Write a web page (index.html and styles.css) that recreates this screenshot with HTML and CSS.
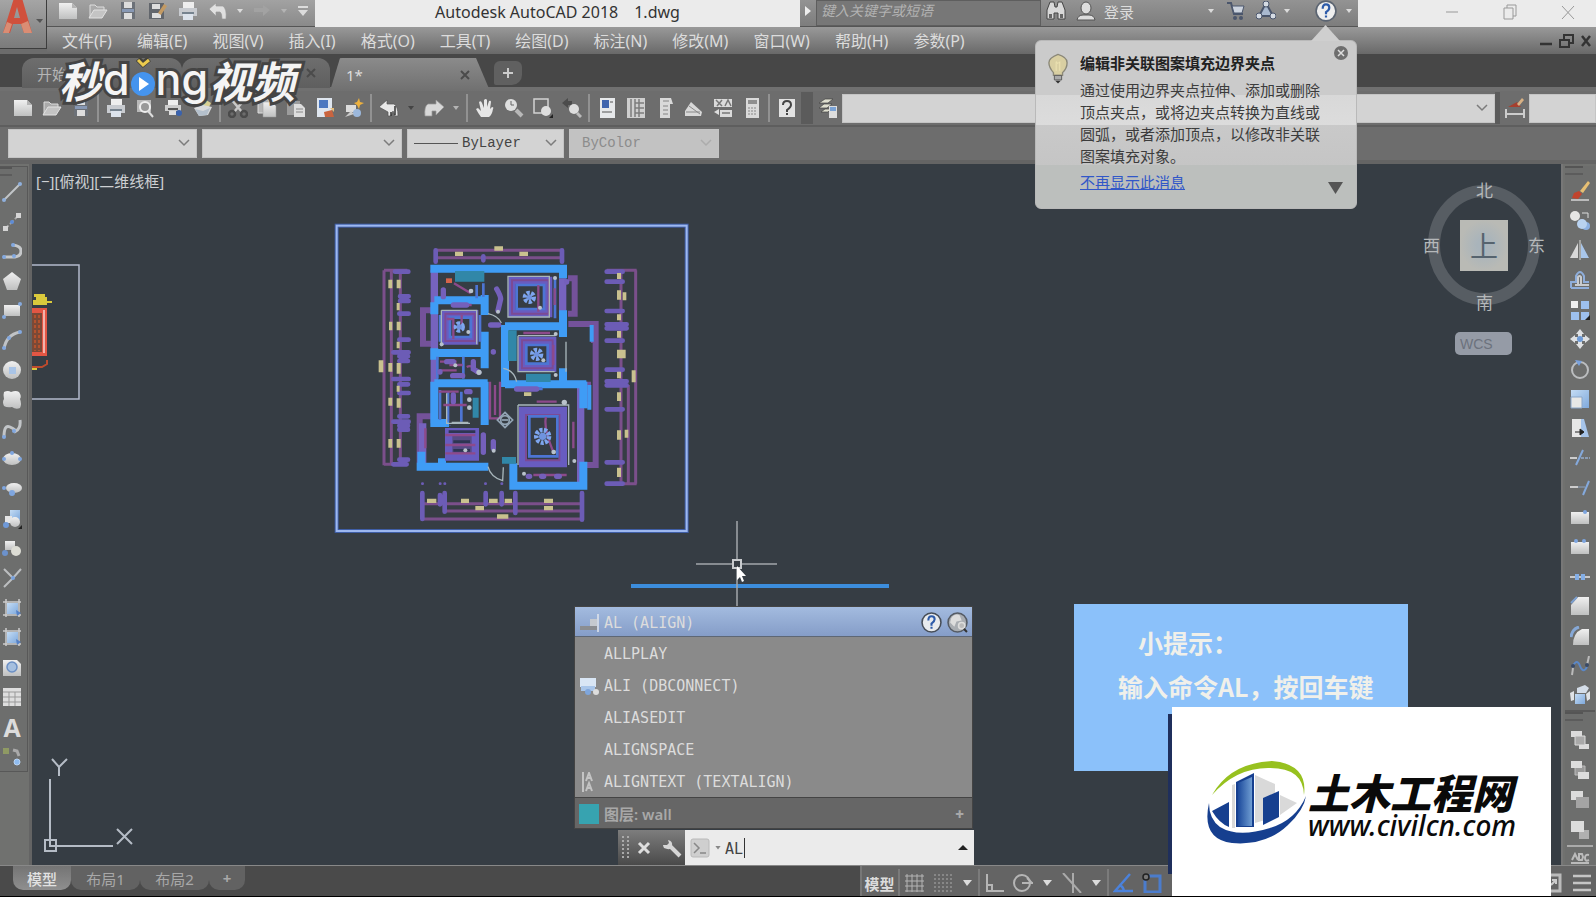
FILE: index.html
```html
<!DOCTYPE html>
<html lang="zh-CN">
<head>
  <meta charset="UTF-8" />
  <title>Autodesk AutoCAD 2018 1.dwg</title>
  <link rel="stylesheet" href="styles.css">
</head>
<body>

  <!-- Iconos -->
  <svg class="sprite" aria-hidden="true">
    <defs>
      <linearGradient id="gw" x1="0" y1="0" x2="0" y2="1"><stop offset="0" stop-color="#f0f0f0"/><stop offset="1" stop-color="#bfc0c0"/></linearGradient>
      <linearGradient id="gb" x1="0" y1="0" x2="1" y2="1"><stop offset="0" stop-color="#c4dcf4"/><stop offset="1" stop-color="#7fa9dc"/></linearGradient>
      <linearGradient id="gt" x1="0" y1="0" x2="1" y2="0"><stop offset="0" stop-color="#1c4a9c"/><stop offset="1" stop-color="#6f9dd2"/></linearGradient>
    </defs>
    <symbol id="i-new" viewBox="0 0 20 20"><path d="M1 2h13l5 5v11H1z" fill="url(#gw)"/><path d="M14 2v5h5" fill="#b4b4b4"/></symbol>
    <symbol id="i-open" viewBox="0 0 20 20"><path d="M2 16V4h5l2 2h7v3" fill="#aaa" stroke="#ddd"/><path d="M1 17l5-8h13l-5 8z" fill="#c4c4c4" stroke="#e2e2e2"/></symbol>
    <symbol id="i-save" viewBox="0 0 20 20"><path d="M3 1h14v17H3z" fill="#6c7178"/><path d="M6 1h8v6H6zM6 12h8v6H6z" fill="#ddd"/><path d="M4 8h12v3H4z" fill="#8798b4"/></symbol>
    <symbol id="i-saveas" viewBox="0 0 20 20"><path d="M1 2h15v16H1z" fill="#62666c"/><path d="M4 3h8v5H4zM4 12h9v5H4z" fill="#ddd"/><path d="M10 12l6-9 3 2-6 9z" fill="#c39a63"/></symbol>
    <symbol id="i-print" viewBox="0 0 20 20"><path d="M5 1h11v6H5z" fill="#eee"/><path d="M1 7h18v8H1z" fill="#c8cbd0"/><path d="M4 11h12v2H4z" fill="#76838f"/><path d="M5 13h10v6H5z" fill="#dce3ec"/></symbol>
    <symbol id="i-preview" viewBox="0 0 20 20"><path d="M2 2h14v12H2z" fill="#b9b9b9"/><circle cx="10" cy="9" r="5" fill="#999" stroke="#eee" stroke-width="2"/><path d="M13 13l5 6" stroke="#ddd" stroke-width="2"/></symbol>
    <symbol id="i-publish" viewBox="0 0 20 20"><path d="M4 2h10v5H4z" fill="#eee"/><path d="M1 7h16v6H1z" fill="#ccc"/><path d="M4 10h10v2H4z" fill="#555"/><circle cx="15" cy="15" r="3" fill="#3a62ad"/><path d="M5 13h7v4H5z" fill="#ddd"/></symbol>
    <symbol id="i-dwf" viewBox="0 0 20 20"><path d="M5 6l8-4 5 3-3 6z" fill="#d9cf92"/><path d="M1 10l9-3 9 2-4 8-9 1z" fill="#d9dadb"/><path d="M2 11l8 2 7-3-3 7-8 1z" fill="#b4c0cc"/></symbol>
    <symbol id="i-cut" viewBox="0 0 20 20"><path d="M3 1l11 13M17 1L6 14" stroke="#c8c8c8" stroke-width="2.500"/><g fill="none" stroke="#4b4b4b" stroke-width="2.500"><circle cx="4" cy="16" r="3"/><circle cx="16" cy="16" r="3"/></g></symbol>
    <symbol id="i-copy" viewBox="0 0 20 20"><path d="M1 1h11v14H1z" fill="#b5b5b5" stroke="#ddd"/><path d="M6 4h9l4 4v11H6z" fill="url(#gw)" stroke="#999" stroke-width=".5"/></symbol>
    <symbol id="i-paste" viewBox="0 0 20 20"><path d="M1 3h13v14H1z" fill="#9c9c9c"/><path d="M5 1h5v3H5z" fill="#ccc"/><path d="M8 6h7l4 4v9H8z" fill="#ddd"/><path d="M10 11h7M10 14h7" stroke="#888"/></symbol>
    <symbol id="i-match" viewBox="0 0 20 20"><path d="M2 0h15v19H2z" fill="#dfe6ef"/><path d="M4 2h9v8H4z" fill="#4c78c0"/><path d="M9 14l8-2 2 7h-9z" fill="#c9643f"/><path d="M15 10h4v4z" fill="#e4bd7d"/></symbol>
    <symbol id="i-block" viewBox="0 0 20 20"><path d="M2 7h10v7H2z" fill="#dcdcdc"/><circle cx="13" cy="15" r="4" fill="#9cb8dc"/><path d="M1 19l6-6 3 3" fill="#ccc"/><path d="M15 0l1 4 4 1-4 2-1 4-2-4-3-2 3-1z" fill="#edb13e"/></symbol>
    <symbol id="i-undo" viewBox="0 0 20 20"><path d="M1 8l7-6v3h7q4 3 3 13h-4q0-6-2-7H8v4z" fill="#e0e0e0" stroke="#999" stroke-width=".7"/></symbol>
    <symbol id="i-undo2" viewBox="0 0 20 20"><path d="M0 9l8-7v4h7q4 2 4 12h-3l-2-5-2 5H9v-4z" fill="#e8e8e8" stroke="#555" stroke-width=".7"/><path d="M16 8v9M12 14v4" stroke="#333" stroke-width="1.500"/></symbol>
    <symbol id="i-redo" viewBox="0 0 20 20"><path d="M20 9l-8-7v4H4Q0 8 1 18h7v-5h4v4z" fill="#d8d8d8" stroke="#999" stroke-width=".7"/></symbol>
    <symbol id="i-redo2" viewBox="0 0 20 20"><path d="M18 9l-7-5v3H2v4h9v4z" fill="#a2a2a2"/></symbol>
    <symbol id="i-pan" viewBox="0 0 20 20"><path d="M6 19q-3-4-5-8l2-1 3 3-2-9q2-2 3 1l2 5V2q2-2 3 0v7l2-6q2-1 2 1l-1 7 2-2q2 0 1 2-1 6-4 8z" fill="#e6e6e6"/></symbol>
    <symbol id="i-zoom" viewBox="0 0 20 20"><circle cx="7" cy="7" r="6" fill="#dfe0e0"/><path d="M7 3v4h3" fill="none" stroke="#666"/><path d="M12 12l6 6" stroke="#b8b8b8" stroke-width="4"/></symbol>
    <symbol id="i-zoomwin" viewBox="0 0 20 20"><path d="M1 1h14v14H1z" fill="none" stroke="#d2d2d2" stroke-width="1.500"/><circle cx="13" cy="13" r="5" fill="#dedede"/><path d="M16 20l4-4v4z" fill="#222"/></symbol>
    <symbol id="i-zoomprev" viewBox="0 0 20 20"><path d="M0 5l6-5v3h4v4H6v3z" fill="#4c4c4c"/><circle cx="12" cy="11" r="5" fill="#dedede"/><path d="M15 15l4 4" stroke="#bbb" stroke-width="3"/></symbol>
    <symbol id="i-props" viewBox="0 0 20 20"><path d="M3 0h15v20H3z" fill="#e6e8ea"/><path d="M5 2h7v8H5z" fill="#3f64ad"/><path d="M13 4h3M5 14h10" stroke="#555"/></symbol>
    <symbol id="i-dc" viewBox="0 0 20 20"><path d="M1 0h18v20H1z" fill="#cfcfcf"/><path d="M5 1v18M9 1v18M13 1v18M9 5h9M9 10h9M9 15h9" stroke="#7d7d7d" stroke-width="1.500"/></symbol>
    <symbol id="i-tp" viewBox="0 0 20 20"><path d="M5 0h11l2 6h-3v14H5z" fill="#d9d9d9"/><path d="M8 3h6M8 8h5M8 12h5M8 16h5" stroke="#848484"/></symbol>
    <symbol id="i-sheet" viewBox="0 0 20 20"><path d="M1 13l6-9 11 10-1 4H1z" fill="#d8d8d8"/><path d="M5 8l11 8M2 14h14" stroke="#888"/></symbol>
    <symbol id="i-markup" viewBox="0 0 20 20"><path d="M1 1h18v8H1zM7 12h12v7H7z" fill="#dadada"/><path d="M3 2l6 6M9 2L4 8M12 8l3-6 3 6M9 15h8" stroke="#777" fill="none" stroke-width="1.500"/><path d="M1 14l5-3v6z" fill="#ddd"/></symbol>
    <symbol id="i-calc" viewBox="0 0 20 20"><path d="M4 0h13v20H4z" fill="#dadada"/><path d="M6 2h9v4H6z" fill="#8f8f8f"/><path d="M6 10h9M6 13h9M6 16h9" stroke="#888" stroke-dasharray="2 1"/></symbol>
    <symbol id="i-help" viewBox="0 0 20 20"><path d="M2 1h16v18H2z" fill="#e2e2e2"/><path d="M6 7q0-4 4-4t4 4q0 2-4 5v2M10 15v2" fill="none" stroke="#444" stroke-width="2"/></symbol>
    <symbol id="i-layer" viewBox="0 0 20 20"><path d="M1 5l6-4h8l-5 4zM1 10l5-4h8l-5 4zM3 14l4-3h6l-3 3z" fill="#dfdfcf" stroke="#444" stroke-width=".7"/><path d="M11 8h8v12h-8z" fill="#ddd"/><path d="M12 9h6v4h-6z" fill="#7ba3d5"/></symbol>
    <symbol id="i-dim" viewBox="0 0 20 20"><path d="M1 11v9M19 11v9M1 16h18" stroke="#ccc" stroke-width="2"/><path d="M3 9l9-5 4 5z" fill="#a5402f"/><path d="M12 6l5-6 2 2-5 6z" fill="#d8b184"/></symbol>

    <!-- Dibujo -->
    <symbol id="i-line" viewBox="0 0 20 20"><path d="M2 18L18 2" stroke="#c2c5c8" stroke-width="2"/><circle cx="2" cy="18" r="2" fill="#8fb0dd"/><circle cx="18" cy="2" r="2" fill="#8fb0dd"/></symbol>
    <symbol id="i-xline" viewBox="0 0 20 20"><path d="M3 17L17 3" stroke="#aaa" stroke-width="2" stroke-dasharray="5 2"/><path d="M1 14h5v5H1zM14 1h5v5h-5z" fill="#d5d5d5"/><circle cx="10" cy="10" r="2" fill="#5e8cd6"/></symbol>
    <symbol id="i-pline" viewBox="0 0 20 20"><path d="M1 16h12q6-1 6-6t-8-6" fill="none" stroke="#c6c8ca" stroke-width="3"/><g fill="#82a8e0"><circle cx="2" cy="16" r="2"/><circle cx="12" cy="15" r="2"/><circle cx="11" cy="4" r="2"/></g></symbol>
    <symbol id="i-poly" viewBox="0 0 20 20"><path d="M10 1l9 7-4 11H5L1 8z" fill="url(#gw)"/></symbol>
    <symbol id="i-rect" viewBox="0 0 20 20"><path d="M2 4h16v11H2z" fill="url(#gw)"/><circle cx="2" cy="16" r="2" fill="#86aade"/><circle cx="18" cy="3" r="2" fill="#86aade"/></symbol>
    <symbol id="i-arc" viewBox="0 0 20 20"><path d="M2 19Q4 5 18 2" fill="none" stroke="#c0c3c6" stroke-width="3"/><g fill="#82a8e0"><circle cx="2" cy="18" r="2"/><circle cx="7" cy="8" r="2"/><circle cx="18" cy="2" r="2"/></g></symbol>
    <symbol id="i-circle" viewBox="0 0 20 20"><circle cx="10" cy="10" r="9" fill="url(#gw)"/><path d="M7 7h7v7H7z" fill="#a9c4e6"/></symbol>
    <symbol id="i-cloud" viewBox="0 0 20 20"><path d="M2 2q4-2 7 0 5-2 8 0 3 4 1 7 2 5 0 9-4 2-8-1-5 1-8-1-2-4 0-7-1-4 0-7z" fill="url(#gw)"/></symbol>
    <symbol id="i-spline" viewBox="0 0 20 20"><path d="M2 18Q2 5 8 8t6 4q5-3 4-11" fill="none" stroke="#c2c5c8" stroke-width="3"/><circle cx="2" cy="18" r="2" fill="#82a8e0"/><circle cx="12" cy="12" r="2" fill="#82a8e0"/></symbol>
    <symbol id="i-ellipse" viewBox="0 0 20 20"><ellipse cx="10" cy="10" rx="9" ry="6" fill="url(#gw)"/><g fill="#7fa6df"><circle cx="2" cy="10" r="2"/><circle cx="18" cy="10" r="2"/><circle cx="10" cy="4" r="2"/></g></symbol>
    <symbol id="i-earc" viewBox="0 0 20 20"><ellipse cx="12" cy="9" rx="8" ry="5" fill="url(#gw)"/><circle cx="2" cy="9" r="2" fill="#7fa6df"/><circle cx="10" cy="14" r="3" fill="#7fa6df"/></symbol>
    <symbol id="i-insert" viewBox="0 0 20 20"><path d="M8 1h10v10H8z" fill="url(#gb)"/><path d="M3 7h7v7H3z" fill="#e5e5e5"/><circle cx="13" cy="13" r="5" fill="url(#gw)"/><circle cx="4" cy="16" r="3" fill="#6f99d8"/><path d="M16 20l4-4v4z" fill="#222"/></symbol>
    <symbol id="i-mkblock" viewBox="0 0 20 20"><path d="M3 3h10v9H3z" fill="url(#gw)"/><circle cx="14" cy="13" r="5" fill="#dcdcd4"/><circle cx="3" cy="15" r="3" fill="#6c92cc"/></symbol>
    <symbol id="i-point" viewBox="0 0 20 20"><path d="M2 1l9 9L19 1M11 10l-9 9" fill="none" stroke="#bcbec0" stroke-width="2"/><circle cx="11" cy="10" r="2" fill="#79a2de"/></symbol>
    <symbol id="i-hatch" viewBox="0 0 20 20"><path d="M4 1v18M17 1v18M1 4h18M1 17h18" stroke="#ccc" stroke-width="1.500"/><path d="M5 5h11v11H5z" fill="url(#gb)"/><path d="M14 12l5 3-4 3z" fill="#5580c4"/></symbol>
    <symbol id="i-region" viewBox="0 0 20 20"><path d="M1 3h14l4 4v12H1z" fill="url(#gw)"/><circle cx="10" cy="10" r="5" fill="#a5bfdf" stroke="#6b8fc4" stroke-width="1.500"/></symbol>
    <symbol id="i-table" viewBox="0 0 20 20"><path d="M1 1h18v18H1z" fill="#dedede"/><path d="M1 5h18M1 10h18M1 15h18M7 5v14M13 5v14" stroke="#999"/></symbol>
    <symbol id="i-addsel" viewBox="0 0 20 20"><path d="M1 2h6v6H1z" fill="#8f9a64"/><path d="M11 4l4 1 2 5" fill="none" stroke="#aaa" stroke-width="3"/><circle cx="15" cy="16" r="3" fill="#8fbcf0" stroke="#bbd4f2"/></symbol>

    <!-- Modificar -->
    <symbol id="i-erase" viewBox="0 0 20 20"><path d="M1 19h18" stroke="#bbb" stroke-width="2"/><path d="M10 10l8-10 2 2-7 10z" fill="#e7bf73"/><path d="M4 12l5-2 3 3-4 5-6-1z" fill="#c1432d"/></symbol>
    <symbol id="i-cp" viewBox="0 0 20 20"><circle cx="5" cy="5" r="5" fill="#e6e6e4"/><circle cx="16" cy="15" r="4" fill="#8cb0e2"/><circle cx="12" cy="13" r="5" fill="#b9d2f0"/><path d="M12 2h6v5" fill="none" stroke="#ddd"/></symbol>
    <symbol id="i-mirror" viewBox="0 0 20 20"><path d="M8 3v15H0z" fill="#d9d9d9"/><path d="M11 3v15h8z" fill="#a9c6ea"/><path d="M10 0v20" stroke="#ddd"/></symbol>
    <symbol id="i-offset" viewBox="0 0 20 20"><path d="M1 18h18M1 18V12h5V6q4-8 8 0v6h5" fill="none" stroke="#8faedb" stroke-width="2"/><path d="M5 15h14M8 14V7q2-2 3 0v7" fill="none" stroke="#c8cbcf" stroke-width="2"/></symbol>
    <symbol id="i-array" viewBox="0 0 20 20"><path d="M1 1h7v7H1z" fill="#eee"/><path d="M11 1h8v8h-8zM1 12h8v8H1zM11 12h8v8h-8z" fill="#9dc0ee"/><path d="M15 20l5-5v5z" fill="#222"/></symbol>
    <symbol id="i-move" viewBox="0 0 20 20"><path d="M10 0l4 5h-2v3h3V6l5 4-5 4v-2h-3v3h2l-4 5-4-5h2v-3H5v2l-5-4 5-4v2h3V5H6z" fill="#dfe1e3"/><circle cx="10" cy="10" r="3" fill="#6e9ad6"/></symbol>
    <symbol id="i-rotate" viewBox="0 0 20 20"><circle cx="10" cy="11" r="8" fill="none" stroke="#bcbec0" stroke-width="2"/><path d="M5 1l7 1-3 5z" fill="#7aa2de"/></symbol>
    <symbol id="i-scale" viewBox="0 0 20 20"><path d="M1 1h18v18H1z" fill="url(#gb)"/><path d="M1 8h11v11H1z" fill="#e8e8e6" stroke="#8aa6c9"/></symbol>
    <symbol id="i-stretch" viewBox="0 0 20 20"><path d="M2 1h9v18H2z" fill="#e6e6e6"/><path d="M11 1h3l5 18h-8z" fill="#a6c4ea"/><path d="M5 14h8M10 11l4 3-4 3z" stroke="#222" fill="#222"/></symbol>
    <symbol id="i-trim" viewBox="0 0 20 20"><path d="M0 10h7" stroke="#ccc" stroke-width="2"/><path d="M11 10h9" stroke="#8b9db5" stroke-width="2" stroke-dasharray="3 1"/><path d="M6 17L13 2" stroke="#84a9dc" stroke-width="2"/></symbol>
    <symbol id="i-extend" viewBox="0 0 20 20"><path d="M0 9h8" stroke="#ccc" stroke-width="2"/><path d="M8 9h7" stroke="#8fa5c4"/><path d="M13 17l6-14" stroke="#84a9dc" stroke-width="2"/></symbol>
    <symbol id="i-brk1" viewBox="0 0 20 20"><path d="M1 5h18v12H1z" fill="url(#gw)"/><circle cx="15" cy="5" r="2" fill="#7da5df"/></symbol>
    <symbol id="i-brk2" viewBox="0 0 20 20"><path d="M1 5h18v12H1z" fill="url(#gw)"/><circle cx="6" cy="4" r="2" fill="#7da5df"/><circle cx="14" cy="4" r="2" fill="#7da5df"/></symbol>
    <symbol id="i-join" viewBox="0 0 20 20"><path d="M0 10h20" stroke="#c8c8c8" stroke-width="2"/><path d="M5 7h4v6H5zM11 7h4v6h-4z" fill="#83aee6"/></symbol>
    <symbol id="i-chamfer" viewBox="0 0 20 20"><path d="M8 1h11v18H1V9z" fill="url(#gw)"/><path d="M1 7l6-6" stroke="#7da0d0" stroke-width="2"/></symbol>
    <symbol id="i-fillet" viewBox="0 0 20 20"><path d="M12 3h7v16H3q0-12 9-16z" fill="url(#gw)"/><path d="M1 11Q2 3 9 1" fill="none" stroke="#86a8d6" stroke-width="3"/></symbol>
    <symbol id="i-blend" viewBox="0 0 20 20"><path d="M2 19q1-5 1-9M17 9q1-4 2-9" stroke="#bbb" stroke-width="2" fill="none"/><path d="M3 10q4-8 7 0t7 1" fill="none" stroke="#5b88c8" stroke-width="2"/><circle cx="3" cy="10" r="2" fill="#394a66"/><circle cx="17" cy="9" r="2" fill="#394a66"/></symbol>
    <symbol id="i-explode" viewBox="0 0 20 20"><path d="M7 3l8-3 4 3-3 5H7z" fill="#d4dde8"/><path d="M5 9h10v10H5z" fill="url(#gb)"/><path d="M0 8l4-2v9l-3 1zM16 9l4-3v8l-3 2z" fill="#e0e3e6"/></symbol>
    <symbol id="i-order1" viewBox="0 0 20 20"><path d="M1 1h11v6H1zM9 14h10v5H9z" fill="#dcdcdc"/><path d="M5 6h10v9H5z" fill="#a9a9a9" stroke="#ddd"/></symbol>
    <symbol id="i-order2" viewBox="0 0 20 20"><path d="M5 6h10v9H5z" fill="#9a9a9a" stroke="#bbb"/><path d="M1 1h11v7H1zM8 12h11v7H8z" fill="#dcdcdc"/></symbol>
    <symbol id="i-order3" viewBox="0 0 20 20"><path d="M1 1h12v9H1z" fill="#dcdcdc"/><path d="M6 7h13v11H6z" fill="#a4a4a4"/></symbol>
    <symbol id="i-order4" viewBox="0 0 20 20"><path d="M9 10h10v9H9z" fill="#b0b0b0"/><path d="M1 1h13v11H1z" fill="#dcdcdc"/></symbol>
    <symbol id="i-chev" viewBox="0 0 12 8"><path d="M1 1l5 5 5-5" fill="none" stroke="#7c7c7c" stroke-width="1.500"/></symbol>
  </svg>

  <!-- Barra de titulo y menus -->
  <header class="header">
    <button class="app-btn" aria-label="AutoCAD">
      <svg width="46" height="48" viewBox="0 0 46 48"><path d="M3 33L14 -2h8l10 35h-8l-3-9H13l-3 9zM14 18h6l-3-11z" fill="#d0503c"/><path d="M3 33l4-11 5 2-3 9zM24 33l-3-9 7-3 4 12z" fill="#da8d74"/><path d="M36 19h7l-3 4z" fill="#555"/></svg>
    </button>
    <div class="header-rows">
      <div class="titlebar">
        <div class="quick">
          <button aria-label="新建"><svg><use href="#i-new"/></svg></button>
          <button aria-label="打开"><svg><use href="#i-open"/></svg></button>
          <button aria-label="保存"><svg><use href="#i-save"/></svg></button>
          <button aria-label="另存为"><svg><use href="#i-saveas"/></svg></button>
          <button aria-label="打印"><svg><use href="#i-print"/></svg></button>
          <button aria-label="放弃"><svg><use href="#i-undo"/></svg></button>
          <i class="tri"></i>
          <button aria-label="重做"><svg><use href="#i-redo2"/></svg></button>
          <i class="tri dim"></i>
          <i class="tri bar"></i>
        </div>
        <div class="doc-title"><span>Autodesk AutoCAD 2018</span><span>1.dwg</span></div>
        <div class="info">
          <i class="tri fwd"></i>
          <input class="search" type="text" placeholder="键入关键字或短语" aria-label="搜索">
          <button aria-label="查找"><svg viewBox="0 0 20 20"><path d="M1 18V9l3-8h4l1 5h2l1-5h4l3 8v9h-7v-6H8v6z" fill="#d8d8d8" stroke="#444"/><path d="M3 13h3v4H3zM14 13h3v4h-3z" fill="#666"/></svg></button>
          <button class="login"><svg viewBox="0 0 20 20"><ellipse cx="10" cy="7" rx="5" ry="6" fill="#ddd" stroke="#555"/><path d="M1 19q1-5 6-5h6q5 0 6 5z" fill="#ddd" stroke="#555"/></svg>登录</button>
          <i class="tri"></i>
          <button aria-label="购物车"><svg viewBox="0 0 20 20"><path d="M1 2h4l3 11h9" fill="none" stroke="#4b566c" stroke-width="2"/><path d="M6 5h12l-2 7H8z" fill="#ccd3de" stroke="#4b566c"/><circle cx="9" cy="17" r="2" fill="#4b566c"/><circle cx="15" cy="17" r="2" fill="#4b566c"/></svg></button>
          <button aria-label="应用"><svg viewBox="0 0 20 20"><path d="M10 2L3 15h14z" fill="#a9b9cf" stroke="#4b566c" stroke-width="2"/><g fill="#d5dbe3" stroke="#4b566c"><circle cx="10" cy="3" r="3"/><circle cx="3" cy="15" r="3"/><circle cx="17" cy="15" r="3"/></g></svg></button>
          <i class="tri near"></i>
          <button class="help" aria-label="帮助"><svg viewBox="0 0 20 20"><circle cx="10" cy="10" r="9" fill="#eee" stroke="#5b6471" stroke-width="1.500"/><path d="M7 8q0-4 3-4t3 3q0 2-3 4v2M10 14v2" fill="none" stroke="#2d5ba9" stroke-width="2"/></svg></button>
          <i class="tri near"></i>
        </div>
        <div class="win">
          <button aria-label="最小化"><svg viewBox="0 0 20 20"><path d="M4 10h12" stroke="#999"/></svg></button>
          <button aria-label="还原"><svg viewBox="0 0 20 20"><path d="M4 6h9v11H4zM7 6V3h9v11h-3" fill="none" stroke="#999"/></svg></button>
          <button aria-label="关闭"><svg viewBox="0 0 20 20"><path d="M4 4l12 13M16 4L4 17" stroke="#999"/></svg></button>
        </div>
      </div>
      <nav class="menubar">
        <button>文件(F)</button><button>编辑(E)</button><button>视图(V)</button><button>插入(I)</button><button>格式(O)</button><button>工具(T)</button><button>绘图(D)</button><button>标注(N)</button><button>修改(M)</button><button>窗口(W)</button><button>帮助(H)</button><button>参数(P)</button>
        <svg class="doc-win" width="56" height="18" viewBox="0 0 56 18"><path d="M0 12h12" stroke="#333" stroke-width="2.500"/><path d="M20 8h9v7h-9zM24 7V3h9v8h-3" fill="none" stroke="#333" stroke-width="2"/><path d="M42 4l8 10M50 4l-8 10" stroke="#333" stroke-width="2.500"/></svg>
      </nav>
    </div>
  </header>

  <!-- Pestañas de archivos -->
  <div class="tabs">
    <button class="tab">开始</button>
    <button class="tab second"><svg class="x" viewBox="0 0 10 10"><path d="M1 1l8 8M9 1L1 9"/></svg></button>
    <button class="tab active">1*<svg class="x" viewBox="0 0 10 10"><path d="M1 1l8 8M9 1L1 9"/></svg></button>
    <button class="tab-add" aria-label="新图形"><svg viewBox="0 0 12 12"><path d="M6 1v10M1 6h10" stroke="#ccc" stroke-width="2"/></svg></button>
    <div class="watermark" aria-label="秒dong视频">
      <span class="zh">秒</span><span class="en">d</span><svg width="24" height="40" viewBox="0 0 24 40"><path d="M7 1l5 5 6-5" fill="none" stroke="#44423a" stroke-width="6"/><circle cx="12" cy="26" r="12" fill="#4594ee"/><path d="M8 19l10 7-10 7z" fill="#fff"/><path d="M7 2l5 5 6-5" fill="none" stroke="#eccb4e" stroke-width="3"/></svg><span class="en">ng</span><span class="zh">视频</span>
    </div>
  </div>

  <!-- Barras de herramientas -->
  <div class="toolbar">
    <button aria-label="新建"><svg><use href="#i-new"/></svg></button>
    <button aria-label="打开"><svg><use href="#i-open"/></svg></button>
    <button aria-label="保存"><svg><use href="#i-save"/></svg></button>
    <i class="sep"></i>
    <button aria-label="打印"><svg><use href="#i-print"/></svg></button>
    <button aria-label="预览"><svg><use href="#i-preview"/></svg></button>
    <button aria-label="发布"><svg><use href="#i-publish"/></svg></button>
    <button aria-label="三维打印"><svg><use href="#i-dwf"/></svg></button>
    <i class="sep"></i>
    <button aria-label="剪切"><svg><use href="#i-cut"/></svg></button>
    <button aria-label="复制"><svg><use href="#i-copy"/></svg></button>
    <button aria-label="粘贴"><svg><use href="#i-paste"/></svg></button>
    <button aria-label="特性匹配"><svg><use href="#i-match"/></svg></button>
    <button aria-label="块编辑器"><svg><use href="#i-block"/></svg></button>
    <i class="sep"></i>
    <button aria-label="放弃"><svg><use href="#i-undo2"/></svg></button>
    <i class="tri dark"></i>
    <button aria-label="重做"><svg><use href="#i-redo"/></svg></button>
    <i class="tri dim"></i>
    <i class="sep"></i>
    <button aria-label="平移"><svg><use href="#i-pan"/></svg></button>
    <button aria-label="缩放"><svg><use href="#i-zoom"/></svg></button>
    <button aria-label="窗口缩放"><svg><use href="#i-zoomwin"/></svg></button>
    <button aria-label="上一个"><svg><use href="#i-zoomprev"/></svg></button>
    <i class="sep"></i>
    <button aria-label="特性"><svg><use href="#i-props"/></svg></button>
    <button aria-label="设计中心"><svg><use href="#i-dc"/></svg></button>
    <button aria-label="工具选项板"><svg><use href="#i-tp"/></svg></button>
    <button aria-label="图纸集"><svg><use href="#i-sheet"/></svg></button>
    <button aria-label="标记集"><svg><use href="#i-markup"/></svg></button>
    <button aria-label="计算器"><svg><use href="#i-calc"/></svg></button>
    <i class="sep"></i>
    <button aria-label="帮助"><svg><use href="#i-help"/></svg></button>
    <i class="gap"></i>
    <button aria-label="图层"><svg><use href="#i-layer"/></svg></button>
    <label class="combo grow"><select aria-label="图层列表"><option></option></select><svg><use href="#i-chev"/></svg></label>
    <i class="gap thin"></i>
    <button aria-label="标注样式"><svg><use href="#i-dim"/></svg></button>
    <label class="combo last"><select aria-label="标注样式列表"><option></option></select></label>
  </div>
  <div class="toolbar props">
    <label class="combo w1"><select aria-label="颜色"><option></option></select><svg><use href="#i-chev"/></svg></label>
    <label class="combo w2"><select aria-label="线型"><option></option></select><svg><use href="#i-chev"/></svg></label>
    <label class="combo w3"><i class="sample"></i><select aria-label="线宽"><option>ByLayer</option></select><svg><use href="#i-chev"/></svg></label>
    <label class="combo w4"><select aria-label="打印样式" disabled><option>ByColor</option></select><svg><use href="#i-chev"/></svg></label>
  </div>

  <!-- Zona de trabajo -->
  <main class="work">
    <aside class="side left">
      <div class="palette draw">
        <i class="grip"></i>
        <button aria-label="直线"><svg><use href="#i-line"/></svg></button>
        <button aria-label="构造线"><svg><use href="#i-xline"/></svg></button>
        <button aria-label="多段线"><svg><use href="#i-pline"/></svg></button>
        <button aria-label="多边形"><svg><use href="#i-poly"/></svg></button>
        <button aria-label="矩形"><svg><use href="#i-rect"/></svg></button>
        <button aria-label="圆弧"><svg><use href="#i-arc"/></svg></button>
        <button aria-label="圆"><svg><use href="#i-circle"/></svg></button>
        <button aria-label="修订云线"><svg><use href="#i-cloud"/></svg></button>
        <button aria-label="样条曲线"><svg><use href="#i-spline"/></svg></button>
        <button aria-label="椭圆"><svg><use href="#i-ellipse"/></svg></button>
        <button aria-label="椭圆弧"><svg><use href="#i-earc"/></svg></button>
        <button aria-label="插入块"><svg><use href="#i-insert"/></svg></button>
        <button aria-label="创建块"><svg><use href="#i-mkblock"/></svg></button>
        <button aria-label="点"><svg><use href="#i-point"/></svg></button>
        <button aria-label="图案填充"><svg><use href="#i-hatch"/></svg></button>
        <button aria-label="渐变色"><svg><use href="#i-hatch"/></svg></button>
        <button aria-label="面域"><svg><use href="#i-region"/></svg></button>
        <button aria-label="表格"><svg><use href="#i-table"/></svg></button>
        <button class="mtext">A</button>
        <button aria-label="添加选定对象"><svg><use href="#i-addsel"/></svg></button>
      </div>
    </aside>

    <section class="canvas">
      <div class="view-label">[−][俯视][二维线框]</div>

      <svg class="other-plan" width="50" height="140" viewBox="0 0 50 140">
        <path d="M0 4h47v134H0" fill="none" stroke="#b3b9cc" stroke-width="1.500"/>
        <path d="M2 33h11v3h2v4h5v2h-5v2H1v-5h3v-3H2z" fill="#dac93c"/>
        <path d="M0 47h15v48H0z" fill="#e25644"/><path d="M0 52h10v39H0z" fill="#7a4937"/><path d="M12 49v43" stroke="#f2b3ab" stroke-width="2"/>
        <path d="M3 54v36M7 54v36" stroke="#b2522e" stroke-dasharray="3 2" stroke-width="2"/>
        <path d="M15 99v4l-5 3H1v2h3" fill="none" stroke="#bd4b2e" stroke-width="2"/><path d="M0 108h5" stroke="#dac93c" stroke-width="2"/>
      </svg>

      <!-- Plano seleccionado -->
      <svg class="plan" width="380" height="330" viewBox="0 0 1140 990" fill="none">
        <rect x="50" y="32" width="1050" height="916" stroke="#3f5ea6" stroke-width="12"/>
        <rect x="50" y="32" width="1050" height="916" stroke="#9db8f0" stroke-width="6"/>
        <!-- cotas -->
        <g stroke="#7b4f8b" stroke-width="9">
          <path d="M345 106h382M345 128h382M192 166v585M214 170v580M241 170v580M192 166h70M192 748h70"/>
          <path d="M947 166v640M925 510v296M903 170v630M860 166h90M860 806h90"/>
          <path d="M307 866h480M370 888h416M307 912h480"/>
        </g>
        <g stroke="#6c5cb6" stroke-width="14" stroke-linecap="round">
          <path d="M347 106v34M726 106v34M490 124v12M225 170h40M240 244h26M240 258h26M238 296h28M238 374h28M220 412h46M238 424h26M238 438h26M220 492h46M238 508h26M238 534h28M238 604h26M220 620h46M238 632h26M238 644h26M238 734h26M220 748h40"/>
          <path d="M860 170h48M860 200h48M860 288h48M860 328h60M860 340h60M860 377h48M860 464h48M860 499h60M860 511h60M860 583h48M860 742h48M860 806h48"/>
          <path d="M307 834v78M360 840v28M374 834v56M497 834v34M545 834v34M586 834v60M786 834v80"/>
          <path d="M307 806h1M360 806h1M374 806h1M496 806h1M545 806h1" stroke-width="8"/>
        </g>
        <g fill="#c9c18f">
          <path d="M523 94h26v13h-26zM405 110h24v13h-24zM598 110h26v13h-26zM176 436h14v36h-14zM205 194h12v26h-12zM230 194h12v26h-12zM207 320h10v26h-10zM230 320h12v26h-12zM205 444h12v26h-12zM230 444h12v32h-12zM205 548h12v24h-12zM230 550h12v28h-12zM205 672h12v26h-12zM230 672h12v26h-12zM230 264h9v22h-9zM230 380h9v20h-9zM230 512h9v18h-9z"/>
          <path d="M891 174h12v18h-12zM891 226h12v28h-12zM908 232h11v24h-11zM891 298h12v18h-12zM891 348h12v20h-12zM891 404h26v26h-26zM891 470h12v20h-12zM935 466h12v36h-12zM891 532h12v26h-12zM891 646h12v28h-12zM914 644h11v24h-11zM891 758h12v28h-12z"/>
          <path d="M321 851h28v13h-28zM423 851h24v13h-24zM507 851h26v13h-26zM554 851h22v13h-22zM672 851h27v13h-27zM466 873h26v13h-26zM672 873h27v13h-27zM531 898h34v13h-34zM612 532h22v11h-22z"/>
        </g>
        <!-- balcones -->
        <g stroke="#74529a" stroke-width="18">
          <path d="M335 286h-26v100h26M744 190h20v106h-20M745 327h82v423h-30M335 604h-36v140"/>
          <path d="M822 330v54M804 500v80"/>
        </g>
        <!-- muros -->
        <g stroke="#7663be" stroke-width="22"><path d="M343 165v460M308 625v130M782 510v310M728 190v130"/></g>
        <g stroke="#3f9cf5" stroke-width="24">
          <path d="M331 161h410M343 256h160M494 240v60M343 262v36M343 414h160M494 350v110M343 400v34M343 505h160M343 500v130M494 500v130M331 624h56M729 150v40M729 286v80M555 334h184M555 330v186M555 508h244M790 500v80M729 460v50M290 755h215M366 730v20M580 745v76M568 812h234M790 740v80M304 710v44"/>
        </g>
        <path d="M815 330v50M808 510v74" stroke="#3f9cf5" stroke-width="12"/>
        <path d="M405 168h88v32h-88zM564 346h26v92h-26zM618 476h74v25h-74zM546 726h42v20h-42zM458 548h18v60h-18z" fill="#3187a8"/>
        <!-- habitaciones -->
        <g stroke="#685cc0" stroke-width="22">
          <path d="M576 196h110v100H576zM376 296h88v82h-88zM606 376h92v84h-92zM608 586h122v160H608z"/>
          <path d="M386 650h80v76h-80z" fill="#564b84"/>
        </g>
        <g stroke="#7c4a94" stroke-width="6">
          <path d="M576 196h110v100H576zM376 296h88v82h-88zM606 376h92v84h-92zM618 600h100v136H618z"/>
        </g>
        <g stroke="#4d75d4" stroke-width="8">
          <path d="M590 210h82v72h-82zM390 308h62v58h-62zM619 390h64v56h-64zM628 604h84v120h-84z"/>
          <path d="M705 190v120M470 210v40M490 205v40M360 300v80M480 300v80M352 425v66M430 425v66M360 525v90M384 530v90M424 530v90M600 520h66M584 522h84"/>
        </g>
        <g stroke="#a8b6bb" stroke-width="4">
          <path d="M564 184h124v122H564zM364 286h106v102M364 286v108M594 362h112M594 362v108h110M594 570h152v180M594 570v180M738 380v90M504 296q30 6 40 28M504 755q8 32 44 42l2-40M380 535v90h70M550 460q32 6 40 40M395 622h50"/>
        </g>
        <g stroke="#8d4a8b" stroke-width="7">
          <path d="M655 210v80M704 220v50M380 312h20v60M425 300v40M360 440h50M360 466h50M440 456q20-10 30 20M405 270h50M610 354h80M700 390v60M510 500v110h30V500M525 510v90M376 660h90M376 690h90M376 715h90M356 530h60M370 570h70M760 620v80M650 560h60"/>
          <path d="M678 606q-8 30 20 100M640 780h100M316 640v60M402 205l50 30M388 450h40"/>
        </g>
        <g stroke="#7460bb" stroke-width="16" stroke-linecap="round">
          <path d="M530 222q12 20 12 30l-8 34M460 440v22l16 10M520 410v1M490 660v52M520 680v20M625 784h4M665 784h6M710 784h8M370 225v20M380 440h20M398 482h30M400 540v20M440 530h10M590 522h60M400 270h40M740 200v1M360 470v1M512 330h24"/>
        </g>
        <path d="M400 680h50M400 706h50M386 650h80" stroke="#2e3652" stroke-width="8"/>
        <path d="M386 632v1" stroke="#4a78d8" stroke-width="14"/>
        <path d="M378 190h18v14h-18z" fill="#d5644b"/>
        <!-- lamparas -->
        <g stroke="#7ea6ef" stroke-width="14" stroke-dasharray="9 4"><circle cx="628" cy="247" r="13"/><circle cx="418" cy="336" r="10"/><circle cx="650" cy="418" r="13"/><circle cx="668" cy="664" r="19"/></g>
        <g fill="#6f93df"><circle cx="628" cy="247" r="8"/><circle cx="418" cy="336" r="8"/><circle cx="650" cy="418" r="8"/><circle cx="668" cy="664" r="11"/></g>
        <g fill="#b9c2cb"><circle cx="453" cy="228" r="7"/><circle cx="534" cy="290" r="6"/><circle cx="705" cy="189" r="6"/><circle cx="445" cy="351" r="6"/><circle cx="365" cy="388" r="6"/><circle cx="406" cy="451" r="6"/><circle cx="477" cy="472" r="8"/><circle cx="707" cy="357" r="6"/><circle cx="670" cy="436" r="6"/><circle cx="707" cy="480" r="6"/><circle cx="448" cy="554" r="7"/><circle cx="448" cy="578" r="7"/><circle cx="733" cy="562" r="8"/><circle cx="701" cy="711" r="7"/><circle cx="436" cy="706" r="6"/><circle cx="521" cy="707" r="6"/><circle cx="612" cy="776" r="6"/><circle cx="763" cy="738" r="6"/><circle cx="660" cy="278" r="6"/></g>
        <path d="M555 592l23 23-23 23-23-23z" stroke="#93a5b5" stroke-width="5"/><circle cx="555" cy="615" r="13" stroke="#93a5b5" stroke-width="5"/><path d="M545 615h20" stroke="#93a5b5" stroke-width="5"/>
      </svg>

      <i class="sel-line"></i>
      <svg class="cursor" width="84" height="86" viewBox="0 0 84 86">
        <path d="M42 0v38M42 47v39M1 43h36M46 43h36" stroke="#a3a7aa" stroke-width="1.500"/>
        <path d="M38 39h8v8h-8z" fill="none" stroke="#c8cbce" stroke-width="2"/>
        <path d="M42 45v14l3-3 2 5 2-1-2-5h4z" fill="#fff"/>
      </svg>

      <svg class="ucs" width="90" height="100" viewBox="0 0 90 100" fill="none" stroke="#b5bcc6" stroke-width="2">
        <path d="M7 22v67h63M2 83h11v11H2zM9 2l7 8 8-8M16 10v9M74 72l15 15M89 72L74 87"/>
      </svg>

      <!-- ViewCube -->
      <div class="cube">
        <svg width="112" height="120" viewBox="0 0 112 120"><ellipse cx="56" cy="60" rx="50" ry="54" fill="none" stroke="#575d63" stroke-width="12"/></svg>
        <span class="n">北</span><span class="s">南</span><span class="w">西</span><span class="e">东</span>
        <button class="top">上</button>
      </div>
      <button class="wcs">WCS</button>

      <!-- Sugerencias de comandos -->
      <div class="suggest">
        <div class="row current">
          <svg viewBox="0 0 20 20"><path d="M1 13h17v4H1z" fill="#8b8d91"/><path d="M11 6h7v7h-7z" fill="#c5c9cf"/><path d="M19 1v18" stroke="#e2e6ec" stroke-width="1.500"/></svg>
          <span class="cmd">AL (ALIGN)</span>
          <svg viewBox="0 0 20 20"><circle cx="10" cy="10" r="9" fill="#e8ebee" stroke="#474e58" stroke-width="1.500"/><path d="M7 8q0-4 3-4t3 3q0 2-3 4v2M10 14v2" fill="none" stroke="#2d5ba9" stroke-width="2"/></svg>
          <svg viewBox="0 0 20 20"><circle cx="10" cy="10" r="9" fill="#a9adb2" stroke="#555b64" stroke-width="1.500"/><path d="M4 6q3-5 8-3l2 5-5 1-2 5-4-4z" fill="#ddd"/><circle cx="14" cy="13" r="3" fill="#bbb" stroke="#ddd" stroke-width="1.500"/><path d="M16 16l3 3" stroke="#333" stroke-width="2"/></svg>
        </div>
        <div class="row"><i class="ico"></i><span class="cmd">ALLPLAY</span></div>
        <div class="row"><svg viewBox="0 0 20 20"><path d="M1 2h16v9H1z" fill="#d9e6f5"/><path d="M2 10h14v5H2z" fill="#a9c6ea"/><circle cx="9" cy="16" r="3" fill="#7fa6dc"/><circle cx="17" cy="16" r="3" fill="#ddd"/></svg><span class="cmd">ALI (DBCONNECT)</span></div>
        <div class="row"><i class="ico"></i><span class="cmd">ALIASEDIT</span></div>
        <div class="row"><i class="ico"></i><span class="cmd">ALIGNSPACE</span></div>
        <div class="row"><svg viewBox="0 0 20 20"><path d="M4 0v20M7 9l3-8 3 8M8 6h4M7 19l3-8 3 8M8 16h4" fill="none" stroke="#c4c4c4" stroke-width="2"/></svg><span class="cmd">ALIGNTEXT (TEXTALIGN)</span></div>
        <div class="row layer"><i class="swatch"></i><span class="cmd">图层: wall</span><b>+</b></div>
      </div>
      <div class="cmdline">
        <svg class="dots" width="8" height="26" viewBox="0 0 8 26"><path d="M1 1v24M6 1v24" stroke="#aaa" stroke-width="2" stroke-dasharray="2 2"/></svg>
        <button aria-label="关闭"><svg viewBox="0 0 20 20"><path d="M5 5l10 10M15 5L5 15" stroke="#ddd" stroke-width="3"/></svg></button>
        <button aria-label="自定义"><svg viewBox="0 0 20 20"><path d="M8 8l10 10" stroke="#d6d6d6" stroke-width="4"/><path d="M6 2q5 1 4 6t-8 2q-1-2-1-3l4 0 2-2z" fill="#d6d6d6"/></svg></button>
        <div class="cmd-box">
          <svg viewBox="0 0 20 20"><rect x="1" y="1" width="18" height="18" rx="2" fill="#cfcfcf" stroke="#b9b9b9"/><path d="M4 5l5 5-5 5M10 15h6" fill="none" stroke="#888" stroke-width="1.500"/></svg>
          <i class="tri gray"></i>
          <input type="text" value="AL" size="2" aria-label="命令"><i class="caret"></i>
          <i class="tri up"></i>
        </div>
      </div>

      <div class="tip"><p>小提示：</p><p>输入命令AL，按回车键</p></div>
    </section>

    <aside class="side right">
      <div class="palette modify">
        <i class="grip"></i>
        <button aria-label="删除"><svg><use href="#i-erase"/></svg></button>
        <button aria-label="复制"><svg><use href="#i-cp"/></svg></button>
        <button aria-label="镜像"><svg><use href="#i-mirror"/></svg></button>
        <button aria-label="偏移"><svg><use href="#i-offset"/></svg></button>
        <button aria-label="阵列"><svg><use href="#i-array"/></svg></button>
        <button aria-label="移动"><svg><use href="#i-move"/></svg></button>
        <button aria-label="旋转"><svg><use href="#i-rotate"/></svg></button>
        <button aria-label="缩放"><svg><use href="#i-scale"/></svg></button>
        <button aria-label="拉伸"><svg><use href="#i-stretch"/></svg></button>
        <button aria-label="修剪"><svg><use href="#i-trim"/></svg></button>
        <button aria-label="延伸"><svg><use href="#i-extend"/></svg></button>
        <button aria-label="打断于点"><svg><use href="#i-brk1"/></svg></button>
        <button aria-label="打断"><svg><use href="#i-brk2"/></svg></button>
        <button aria-label="合并"><svg><use href="#i-join"/></svg></button>
        <button aria-label="倒角"><svg><use href="#i-chamfer"/></svg></button>
        <button aria-label="圆角"><svg><use href="#i-fillet"/></svg></button>
        <button aria-label="光顺曲线"><svg><use href="#i-blend"/></svg></button>
        <button aria-label="分解"><svg><use href="#i-explode"/></svg></button>
      </div>
      <div class="palette order">
        <i class="grip"></i>
        <button aria-label="前置"><svg><use href="#i-order1"/></svg></button>
        <button aria-label="后置"><svg><use href="#i-order2"/></svg></button>
        <button aria-label="置于对象之上"><svg><use href="#i-order3"/></svg></button>
        <button aria-label="置于对象之下"><svg><use href="#i-order4"/></svg></button>
        <i class="hr"></i>
        <button aria-label="注释前置"><svg viewBox="0 0 20 20"><path d="M2 8l3-6 3 6M9 2v6h3l1-3-1-3zM19 3q-4-1-4 3t4 2M1 11h18" fill="none" stroke="#bbb" stroke-width="2"/></svg></button>
      </div>
    </aside>
  </main>

  <!-- Barra de estado -->
  <footer class="status">
    <button class="ltab on">模型</button>
    <button class="ltab">布局1</button>
    <button class="ltab">布局2</button>
    <button class="ltab plus">+</button>
    <div class="tools">
      <button class="model">模型</button>
      <button class="b1" aria-label="栅格"><svg viewBox="0 0 20 20"><path d="M3 1v18M8 1v18M13 1v18M18 1v18M1 3h19M1 8h19M1 13h19M1 18h19" stroke="#b5b5b5"/></svg></button>
      <button aria-label="捕捉"><svg viewBox="0 0 20 20"><path d="M1 2h19M1 6h19M1 10h19M1 14h19M1 18h19" stroke="#aaa" stroke-width="1" stroke-dasharray="2 2"/></svg></button>
      <i class="tri"></i>
      <button class="b1" aria-label="正交"><svg viewBox="0 0 20 20"><path d="M3 1v17h17M3 12h5v6" fill="none" stroke="#b5b5b5" stroke-width="2"/></svg></button>
      <button aria-label="极轴"><svg viewBox="0 0 20 20"><circle cx="9" cy="10" r="8" fill="none" stroke="#b5b5b5" stroke-width="2"/><path d="M9 10h11M14 5l5 5" stroke="#b5b5b5" stroke-width="2"/></svg></button>
      <i class="tri"></i>
      <button aria-label="等轴测"><svg viewBox="0 0 20 20"><path d="M1 0l18 20M11 0v20" stroke="#aaa" stroke-width="2"/></svg></button>
      <i class="tri"></i>
      <button class="b1" aria-label="对象捕捉追踪"><svg viewBox="0 0 20 20"><path d="M17 1L2 18h18M6 12q4 1 5 6" fill="none" stroke="#4b82dc" stroke-width="2.500"/></svg></button>
      <button aria-label="对象捕捉"><svg viewBox="0 0 20 20"><path d="M4 3h14v16H3V6" fill="none" stroke="#4b7ccc" stroke-width="3"/><circle cx="4" cy="4" r="3" fill="#777" stroke="#222" stroke-width="1.500"/></svg></button>
      <button class="end" aria-label="全屏"><svg viewBox="0 0 20 20"><path d="M2 2h15v16H2z" fill="none" stroke="#bbb" stroke-width="3"/><path d="M8 12l5-5M9 7h4v4" stroke="#ccc" stroke-width="2" fill="none"/></svg></button>
      <button aria-label="自定义"><svg viewBox="0 0 20 20"><path d="M1 3h18M1 10h18M1 17h18" stroke="#c5c5c5" stroke-width="2.500"/></svg></button>
    </div>
  </footer>

  <!-- Globo de ayuda -->
  <div class="balloon">
    <svg class="bulb" width="20" height="34" viewBox="0 0 22 34"><path d="M6 21Q1 15 1 10t10-9q10 3 10 9t-5 11v3H6z" fill="#d9cfa2" stroke="#8b8878" stroke-width="1.500"/><path d="M7 24h8v5H7z" fill="#aaa" stroke="#555"/><path d="M8 30h6l-3 3z" fill="#333"/><path d="M9 19V9l2 2 2-2v10" stroke="#efe6b5" fill="none"/></svg>
    <div>
      <h2>编辑非关联图案填充边界夹点</h2>
      <p>通过使用边界夹点拉伸、添加或删除<br>顶点夹点，或将边夹点转换为直线或<br>圆弧，或者添加顶点，以修改非关联<br>图案填充对象。</p>
      <a href="#">不再显示此消息</a>
    </div>
    <button class="close" aria-label="关闭"><svg viewBox="0 0 14 14"><circle cx="7" cy="7" r="7" fill="#6e6e6e"/><path d="M4 4l6 6M10 4l-6 6" stroke="#ddd" stroke-width="1.500"/></svg></button>
    <i class="more"></i>
  </div>

  <!-- Logo -->
  <div class="brand">
    <svg width="102" height="84" viewBox="0 0 102 84">
      <path d="M49 14l20 9v33l-20 6zM74 34l17 8-17 12z" fill="#d9d9d9"/>
      <path d="M6 50l17-9v25q-10-4-17-16zM57 37l16-7v26l-16 8z" fill="#163f8f"/>
      <path d="M26 24l3-1v44h-3z" fill="#d9d9d9"/>
      <path d="M30 21l18-9v54H30z" fill="#163f8f"/>
      <path d="M32 22l14-6v49H32z" fill="url(#gt)"/>
      <path d="M6 34Q24 2 66 0q36 3 32 34-1-28-36-27Q30 7 6 34z" fill="#97c11f"/>
      <path d="M3 42Q-5 78 26 82q34 3 56-18 16-15 18-29-10 24-36 32-32 10-50-1Q3 58 3 42z" fill="#163f8f"/>
    </svg>
    <div class="brand-text"><strong>土木工程网</strong><span>www.civilcn.com</span></div>
  </div>

</body>
</html>
```

FILE: styles.css
```css
* {
  box-sizing: border-box;
}
body {
  margin: 0;
  height: 100vh;
  display: flex;
  flex-direction: column;
  overflow: hidden;
  position: relative;
  font-family: "Noto Sans", "Noto Sans CJK SC", sans-serif;
  font-size: 15px;
  color: #dcdcdc;
  background: #6d6d6d;
  border-bottom: 1px solid #000;
}
button {
  background: none;
  border: none;
  padding: 0;
  margin: 0;
  font: inherit;
  color: inherit;
  display: flex;
  align-items: center;
  justify-content: center;
  flex: none;
}
button svg {
  width: 20px;
  height: 20px;
  flex: none;
}
.sprite {
  position: absolute;
  width: 0;
  height: 0;
}

/* flechas pequeñas */
.tri {
  flex: none;
  width: 16px;
  height: 4px;
  background: #dcdcdc;
  clip-path: polygon(5px 0, 11px 0, 8px 100%);
}
.tri.dim {
  background: #b4b4b4;
}
.tri.dark {
  background: #444;
}
.tri.gray {
  background: #888;
}

/* cabecera */
.header {
  display: flex;
  height: 54px;
  flex: none;
  background: #6c6c6c;
}
.app-btn {
  width: 47px;
  height: 49px;
  background: linear-gradient(#a5a5a5, #7b7b7b);
  border-right: 1px solid #3d3d3d;
  border-bottom: 1px solid #3d3d3d;
}
.app-btn svg {
  width: 46px;
  height: 48px;
}
.header-rows {
  flex: 1;
  min-width: 0;
}
.titlebar {
  display: flex;
  height: 27px;
  background: linear-gradient(#939393, #7c7c7c);
}
.quick {
  width: 268px;
  padding: 0 0 4px 6px;
  display: flex;
  align-items: center;
  border-bottom: 1px solid #555;
  background: linear-gradient(#a2a2a2, #8a8a8a);
}
.quick button {
  width: 30px;
  height: 22px;
}
.quick .tri {
  margin: 0 -1px;
}
.quick .bar {
  height: 10px;
  margin-left: 4px;
  clip-path: polygon(3px 0, 13px 0, 13px 2px, 3px 2px, 3px 4px, 13px 4px, 8px 10px, 3px 4px);
}
.doc-title {
  flex: 1;
  display: flex;
  justify-content: center;
  align-items: center;
  gap: 16px;
  background: #ebebeb;
  color: #333;
  font-size: 16px;
  line-height: 24px;
  padding-bottom: 3px;
}
.info {
  width: 558px;
  display: flex;
  align-items: center;
  border-bottom: 1px solid #555;
  padding-bottom: 4px;
}
.info .fwd {
  height: 10px;
  background: #eee;
  clip-path: polygon(5px 0, 11px 5px, 5px 100%);
}
.search {
  width: 225px;
  height: 26px;
  padding: 0 4px 6px;
  border: 1px solid #5e5e5e;
  background: #777;
  font: italic 14px "Noto Sans", "Noto Sans CJK SC", sans-serif;
  color: #bdbdbd;
  margin-bottom: -4px;
}
.search::placeholder {
  color: #b2b2b2;
}
.info button {
  width: 30px;
}
.info .login {
  width: 124px;
  gap: 8px;
  justify-content: flex-start;
  padding-left: 5px;
  margin-right: 8px;
}
.info .tri + button {
  margin-left: 2px;
}
.info .near {
  margin-left: -2px;
}
.info .tri + .help {
  margin-left: 16px;
}
.info .help + .near {
  margin-left: 0;
}
.help svg {
  width: 22px;
  height: 22px;
}
.win {
  width: 238px;
  background: #ebebeb;
  display: flex;
  justify-content: flex-end;
  padding: 0 18px 4px 0;
  gap: 38px;
}
.menubar {
  height: 27px;
  display: flex;
  align-items: center;
  gap: 25px;
  padding-left: 15px;
  background: linear-gradient(#999, #696969);
  font-size: 16px;
}
.menubar button {
  line-height: 26px;
}
.doc-win {
  margin-left: auto;
}

/* pestañas */
.tabs {
  height: 37px;
  flex: none;
  display: flex;
  position: relative;
  padding: 4px 0 0 22px;
  background: linear-gradient(#474747 33px, #707070 33px);
}
.tab {
  width: 160px;
  height: 30px;
  justify-content: space-between;
  padding: 0 14px 0 15px;
  border-radius: 12px 12px 0 0;
  background: linear-gradient(#6e6e6e, #5f5f5f);
  color: #b5b5b5;
}
.tab.second {
  width: 148px;
  justify-content: flex-end;
}
.tab.active {
  width: 160px;
  height: 33px;
  padding: 0 20px 0 16px;
  background: linear-gradient(#8b8b8b, #707070);
  clip-path: polygon(10px 0, 146px 0, 160px 100%, 0 100%);
  color: #ddd;
}
.x {
  width: 10px;
  height: 10px;
  stroke: #4b4b4b;
  stroke-width: 2;
}
.tab-add {
  width: 28px;
  height: 24px;
  margin: 3px 0 0 4px;
  border-radius: 6px 6px 10px 2px;
  background: #606060;
}
.tab-add svg {
  width: 12px;
  height: 12px;
}
.watermark {
  position: absolute;
  left: 59px;
  top: 0;
  z-index: 5;
  height: 50px;
  display: flex;
  align-items: center;
  gap: 1px;
  color: #f4f4f4;
  -webkit-text-stroke: 6px #444;
  paint-order: stroke fill;
}
.watermark .zh {
  font: italic bold 43px/46px "Noto Sans CJK SC", sans-serif;
}
.watermark .en {
  font: 500 43px/46px Inter, sans-serif;
}
.watermark svg {
  margin-bottom: 2px;
}

/* barras */
.toolbar {
  height: 36px;
  flex: none;
  display: flex;
  align-items: center;
  padding-left: 8px;
  border-bottom: 2px solid #5e5e5e;
}
.toolbar button {
  width: 29px;
}
.sep {
  width: 6px;
  height: 28px;
  flex: none;
  background: linear-gradient(90deg, #6d6d6d 2px, #929292 2px, #929292 4px, #6d6d6d 4px);
}
.gap {
  width: 12px;
  height: 32px;
  flex: none;
  background: #5b5b5b;
}
.gap.thin {
  width: 5px;
}
.combo {
  position: relative;
  height: 29px;
  flex: none;
  display: flex;
  align-items: center;
  background: #d3d3d3;
  border: 1px solid #c4c4c4;
}
.combo select {
  appearance: none;
  width: 100%;
  height: 100%;
  border: none;
  background: none;
  padding: 0 8px;
  font: 14px "Liberation Mono", monospace;
  color: #444;
}
.combo svg {
  position: absolute;
  right: 6px;
  width: 12px;
  height: 8px;
}
.combo.grow {
  flex: 1;
}
.combo.last {
  width: 67px;
}
.props {
  height: 37px;
  gap: 5px;
  padding-bottom: 1px;
  border-bottom: 4px solid #646464;
}
.w1 {
  width: 189px;
}
.w2 {
  width: 200px;
}
.w3 {
  width: 157px;
}
.w4 {
  width: 150px;
  background: #c2c2c2;
}
.combo.w3 select {
  padding-left: 4px;
}
.combo.w4 select {
  padding-left: 12px;
  color: #8c8c8c;
  opacity: 1;
}
.w4 svg {
  opacity: 0.3;
}
.sample {
  width: 44px;
  height: 1px;
  margin-left: 6px;
  background: #555;
  flex: none;
}

/* zona de trabajo */
.work {
  flex: 1;
  min-height: 0;
  display: flex;
  border-bottom: 1px solid #888;
}
.side {
  flex: none;
  background: #70716f;
  padding-top: 2px;
  overflow: hidden;
}
.side.left {
  width: 32px;
  border-right: 3px solid #646464;
}
.side.right {
  width: 35px;
  padding-left: 2px;
  border-left: 2px solid #777;
}
.palette {
  display: flex;
  flex-direction: column;
  border: 1px solid #585858;
  border-left: none;
  background: #6d6e6d;
  margin-right: 1px;
}
.palette.draw {
  height: 606px;
  padding-right: 3px;
}
.palette.modify {
  height: 546px;
}
.right .palette {
  border: none;
  border-bottom: 2px solid #585858;
}
.palette button {
  width: 100%;
  flex: 1;
  min-height: 0;
}
.palette.order button {
  flex: none;
  height: 30px;
}
.grip {
  flex: none;
  height: 9px;
  margin-right: 12px;
  border-top: 2px solid #555;
  border-bottom: 2px solid #5c5c5c;
  margin-bottom: 1px;
}
.order .grip {
  margin-bottom: 4px;
}
.mtext {
  font-weight: bold;
  font-size: 25px;
  line-height: 26px;
  font-family: "Open Sans", sans-serif;
}
.hr {
  flex: none;
  height: 2px;
  margin: 0 2px;
  background: #aaa;
}

.canvas {
  flex: 1;
  min-width: 0;
  position: relative;
  background: #363d44;
  overflow: hidden;
}
.view-label {
  padding: 6px 4px;
  line-height: 22px;
  color: #cdd0d3;
}
.other-plan {
  position: absolute;
  left: 0;
  top: 97px;
}
.plan {
  position: absolute;
  left: 288px;
  top: 51px;
}
.sel-line {
  position: absolute;
  left: 599px;
  top: 420px;
  width: 258px;
  height: 4px;
  background: #3c8ddc;
}
.cursor {
  position: absolute;
  left: 663px;
  top: 357px;
}
.ucs {
  position: absolute;
  left: 11px;
  bottom: 8px;
}
.cube {
  position: absolute;
  right: 21px;
  top: 21px;
  width: 112px;
  height: 120px;
  color: #b5b8ba;
  font-size: 17px;
  line-height: 20px;
}
.cube span {
  position: absolute;
}
.cube .n {
  left: 48px;
  top: -4px;
}
.cube .s {
  left: 48px;
  bottom: -8px;
}
.cube .w {
  left: -5px;
  top: 51px;
}
.cube .e {
  right: -5px;
  top: 51px;
}
.cube .top {
  position: absolute;
  left: 32px;
  top: 35px;
  width: 48px;
  height: 51px;
  background: radial-gradient(#a9b4bb 20%, #b9bab5 70%);
  color: #56636e;
  font-size: 28px;
  line-height: 40px;
}
.wcs {
  position: absolute;
  right: 49px;
  top: 168px;
  width: 57px;
  height: 23px;
  border-radius: 5px;
  background: #959ba6;
  color: #6c727d;
  font: 14px "Liberation Sans", sans-serif;
  justify-content: flex-start;
  padding-left: 5px;
}

/* comandos */
.suggest {
  position: absolute;
  left: 542px;
  bottom: 36px;
  width: 399px;
  border: 1px solid #444;
  background: #8a8a8a;
  font: 15px/32px "DejaVu Sans Mono", "Noto Sans CJK SC", monospace;
}
.row {
  height: 32px;
  display: flex;
  align-items: center;
  padding: 2px 4px 0;
  gap: 5px;
}
.row svg, .row .ico, .row .swatch {
  width: 20px;
  height: 20px;
  flex: none;
}
.row .cmd {
  flex: 1;
}
.row.current {
  height: 30px;
  background: linear-gradient(#a3bbdf, #859dc8);
  border-bottom: 1px solid #5e6775;
}
.current svg:nth-last-child(-n+2) {
  width: 21px;
  height: 21px;
}
.row.layer {
  height: 31px;
  background: #666;
  border-top: 1px solid #444;
  color: #a8a8a8;
  font-family: "Noto Sans", "Noto Sans CJK SC", sans-serif;
  font-weight: 600;
}
.row .swatch {
  background: #37a3b0;
}
.row b {
  padding-right: 4px;
}
.cmdline {
  position: absolute;
  left: 586px;
  bottom: 0;
  width: 356px;
  height: 35px;
  display: flex;
  align-items: center;
  padding-left: 4px;
  background: linear-gradient(#7d7d7d, #4a4a4a);
}
.cmdline button {
  width: 27px;
}
.cmdline .dots + button {
  margin-right: 1px;
}
.cmd-box {
  flex: 1;
  height: 35px;
  display: flex;
  align-items: center;
  padding: 0 3px 0 5px;
  background: #ebebeb;
}
.cmd-box svg {
  width: 20px;
  height: 20px;
}
.cmd-box input {
  border: none;
  background: none;
  padding: 2px 0 0;
  width: 19px;
  height: 28px;
  font: 15px "DejaVu Sans Mono", monospace;
  color: #444;
}
.cmd-box .gray {
  width: 15px;
}
.caret {
  width: 1px;
  height: 20px;
  background: #333;
}
.tri.up {
  margin-left: auto;
  height: 5px;
  background: #222;
  clip-path: polygon(3px 100%, 13px 100%, 8px 0);
}

/* aviso */
.tip {
  position: absolute;
  right: 153px;
  bottom: 94px;
  width: 334px;
  height: 167px;
  padding: 16px 0 0 44px;
  background: #8bc1fa;
  color: #f0f0ea;
  font: 600 25px/44px "Noto Sans CJK SC", sans-serif;
}
.tip p {
  margin: 0;
}
.tip p:first-child {
  padding-left: 20px;
}

/* estado */
.status {
  height: 30px;
  flex: none;
  display: flex;
  background: #4a4a4a;
  padding-left: 13px;
}
.ltab {
  width: 69px;
  height: 24px;
  border-radius: 0 0 10px 10px;
  background: #626262;
  color: #a8a8a8;
}
.ltab.on {
  width: 58px;
  background: linear-gradient(#747474, #8f8f8f);
  color: #e2e2e2;
  font-weight: 500;
}
.ltab.plus {
  width: 36px;
  font-weight: bold;
}
.tools {
  margin-left: auto;
  width: 736px;
  display: flex;
  align-items: center;
  background: #646464;
  padding-top: 4px;
  border-left: 2px solid #777;
}
.tools button {
  width: 29px;
}
.tools .tri {
  height: 6px;
  width: 18px;
  margin: 0 1px;
  clip-path: polygon(5px 0, 14px 0, 9px 100%);
}
.tools .model {
  width: 35px;
  font-weight: bold;
}
.tools .b1 {
  width: 30px;
  border-left: 2px solid #7b7b7b;
  height: 28px;
  margin-left: 1px;
}
.tools .end {
  margin-left: auto;
}

/* globo */
.balloon {
  position: absolute;
  right: 239px;
  top: 40px;
  z-index: 10;
  width: 322px;
  height: 169px;
  display: flex;
  align-items: flex-start;
  gap: 12px;
  padding: 11px 12px 0;
  border: 1px solid #b9b9b9;
  border-radius: 6px;
  background: linear-gradient(#cbcbcb 54px, #d8d8d8 54px, #dcdcdc 84px, #c9c9c9 84px, #c5c5c5 124px, #bcbfbd 124px);
  color: #3c3c3c;
}
.balloon::before {
  content: "";
  position: absolute;
  right: 16px;
  top: -16px;
  width: 29px;
  height: 16px;
  background: #cfcfcf;
  clip-path: polygon(0 100%, 50% 0, 100% 100%);
}
.balloon h2 {
  margin: 0;
  font-size: 15px;
  line-height: 22px;
  color: #222;
}
.balloon p {
  margin: 5px 0;
  line-height: 22px;
}
.balloon a {
  color: #3157c8;
  line-height: 20px;
}
.balloon .close {
  position: absolute;
  right: 8px;
  top: 5px;
}
.balloon .close svg {
  width: 14px;
  height: 14px;
}
.more {
  position: absolute;
  right: 13px;
  bottom: 14px;
  width: 15px;
  height: 12px;
  background: #555;
  clip-path: polygon(0 0, 100% 0, 50% 100%);
}

/* logo */
.brand {
  position: absolute;
  right: 45px;
  bottom: -1px;
  z-index: 20;
  width: 379px;
  height: 190px;
  display: flex;
  align-items: flex-start;
  padding: 54px 0 0 34px;
  background: #fff;
  color: #0a0a0a;
}
.brand::before {
  content: "";
  position: absolute;
  left: -4px;
  top: 7px;
  width: 4px;
  height: 160px;
  background: #1f2f5c;
}
.brand-text {
  display: flex;
  flex-direction: column;
  padding-top: 10px;
}
.brand-text strong {
  font: italic 900 41px/40px "Noto Sans CJK SC", sans-serif;
}
.brand-text span {
  font: italic 500 28px/28px "Noto Sans", sans-serif;
}
```
